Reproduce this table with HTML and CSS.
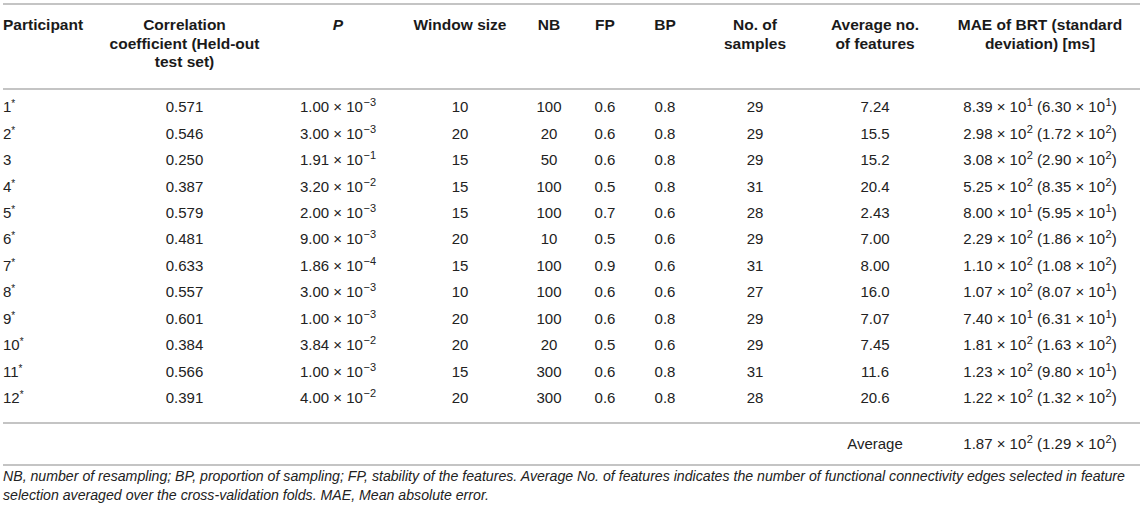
FILE: index.html
```html
<!DOCTYPE html>
<html lang="en">
<head>
<meta charset="utf-8">
<title>Table</title>
<link rel="stylesheet" href="styles.css">
</head>
<body>
<div class="page">
<table class="data">
<colgroup>
<col class="c1"><col class="c2"><col class="c3"><col class="c4"><col class="c5"><col class="c6"><col class="c7"><col class="c8"><col class="c9"><col class="c10">
</colgroup>
<thead>
<tr>
<th class="left">Participant</th>
<th>Correlation<br>coefficient (Held-out<br>test set)</th>
<th><i>P</i></th>
<th>Window size</th>
<th>NB</th>
<th>FP</th>
<th>BP</th>
<th>No. of<br>samples</th>
<th>Average no.<br>of features</th>
<th>MAE of BRT (standard<br>deviation) [ms]</th>
</tr>
</thead>
<tbody>
<tr><td class="left">1<sup class="star">*</sup></td><td>0.571</td><td>1.00 × 10<sup>−3</sup></td><td>10</td><td>100</td><td>0.6</td><td>0.8</td><td>29</td><td>7.24</td><td>8.39 × 10<sup>1</sup> (6.30 × 10<sup>1</sup>)</td></tr>
<tr><td class="left">2<sup class="star">*</sup></td><td>0.546</td><td>3.00 × 10<sup>−3</sup></td><td>20</td><td>20</td><td>0.6</td><td>0.8</td><td>29</td><td>15.5</td><td>2.98 × 10<sup>2</sup> (1.72 × 10<sup>2</sup>)</td></tr>
<tr><td class="left">3</td><td>0.250</td><td>1.91 × 10<sup>−1</sup></td><td>15</td><td>50</td><td>0.6</td><td>0.8</td><td>29</td><td>15.2</td><td>3.08 × 10<sup>2</sup> (2.90 × 10<sup>2</sup>)</td></tr>
<tr><td class="left">4<sup class="star">*</sup></td><td>0.387</td><td>3.20 × 10<sup>−2</sup></td><td>15</td><td>100</td><td>0.5</td><td>0.8</td><td>31</td><td>20.4</td><td>5.25 × 10<sup>2</sup> (8.35 × 10<sup>2</sup>)</td></tr>
<tr><td class="left">5<sup class="star">*</sup></td><td>0.579</td><td>2.00 × 10<sup>−3</sup></td><td>15</td><td>100</td><td>0.7</td><td>0.6</td><td>28</td><td>2.43</td><td>8.00 × 10<sup>1</sup> (5.95 × 10<sup>1</sup>)</td></tr>
<tr><td class="left">6<sup class="star">*</sup></td><td>0.481</td><td>9.00 × 10<sup>−3</sup></td><td>20</td><td>10</td><td>0.5</td><td>0.6</td><td>29</td><td>7.00</td><td>2.29 × 10<sup>2</sup> (1.86 × 10<sup>2</sup>)</td></tr>
<tr><td class="left">7<sup class="star">*</sup></td><td>0.633</td><td>1.86 × 10<sup>−4</sup></td><td>15</td><td>100</td><td>0.9</td><td>0.6</td><td>31</td><td>8.00</td><td>1.10 × 10<sup>2</sup> (1.08 × 10<sup>2</sup>)</td></tr>
<tr><td class="left">8<sup class="star">*</sup></td><td>0.557</td><td>3.00 × 10<sup>−3</sup></td><td>10</td><td>100</td><td>0.6</td><td>0.6</td><td>27</td><td>16.0</td><td>1.07 × 10<sup>2</sup> (8.07 × 10<sup>1</sup>)</td></tr>
<tr><td class="left">9<sup class="star">*</sup></td><td>0.601</td><td>1.00 × 10<sup>−3</sup></td><td>20</td><td>100</td><td>0.6</td><td>0.8</td><td>29</td><td>7.07</td><td>7.40 × 10<sup>1</sup> (6.31 × 10<sup>1</sup>)</td></tr>
<tr><td class="left">10<sup class="star">*</sup></td><td>0.384</td><td>3.84 × 10<sup>−2</sup></td><td>20</td><td>20</td><td>0.5</td><td>0.6</td><td>29</td><td>7.45</td><td>1.81 × 10<sup>2</sup> (1.63 × 10<sup>2</sup>)</td></tr>
<tr><td class="left">11<sup class="star">*</sup></td><td>0.566</td><td>1.00 × 10<sup>−3</sup></td><td>15</td><td>300</td><td>0.6</td><td>0.8</td><td>31</td><td>11.6</td><td>1.23 × 10<sup>2</sup> (9.80 × 10<sup>1</sup>)</td></tr>
<tr><td class="left">12<sup class="star">*</sup></td><td>0.391</td><td>4.00 × 10<sup>−2</sup></td><td>20</td><td>300</td><td>0.6</td><td>0.8</td><td>28</td><td>20.6</td><td>1.22 × 10<sup>2</sup> (1.32 × 10<sup>2</sup>)</td></tr>
</tbody>
<tfoot>
<tr><td class="left"></td><td></td><td></td><td></td><td></td><td></td><td></td><td></td><td>Average</td><td>1.87 × 10<sup>2</sup> (1.29 × 10<sup>2</sup>)</td></tr>
</tfoot>
</table>
<p class="note">NB, number of resampling; BP, proportion of sampling; FP, stability of the features. Average No. of features indicates the number of functional connectivity edges selected in feature selection averaged over the cross-validation folds. MAE, Mean absolute error.</p>
</div>
</body>
</html>
```
FILE: styles.css
```css
html, body {
  margin: 0;
  padding: 0;
  background: #ffffff;
}

body {
  font-family: "Liberation Sans", Arial, Helvetica, sans-serif;
  color: #222222;
}

.page {
  padding: 3px 5px 0 3px;
}

.data {
  border-collapse: collapse;
  table-layout: fixed;
  width: 1137px;
}

.c1 { width: 92px; }
.c2 { width: 179px; }
.c3 { width: 128px; }
.c4 { width: 116px; }
.c5 { width: 62px; }
.c6 { width: 50px; }
.c7 { width: 70px; }
.c8 { width: 110px; }
.c9 { width: 130px; }
.c10 { width: 200px; }

.data th {
  font-size: 15.5px;
  font-weight: bold;
  line-height: 18.5px;
  color: #1a1a1a;
  vertical-align: top;
  text-align: center;
  padding: 11px 0 16px;
  border-top: 2px solid #c4c4c4;
  border-bottom: 2px solid #c4c4c4;
  white-space: nowrap;
}

.data td {
  font-size: 15px;
  height: 26.45px;
  padding: 0;
  text-align: center;
  vertical-align: middle;
  white-space: nowrap;
}

.data .left {
  text-align: left;
}

.data tbody tr:first-child td {
  padding-top: 4px;
}

.data tbody tr:last-child td {
  padding-bottom: 11px;
}

.data tfoot td {
  height: 40px;
  border-top: 2px solid #c4c4c4;
  border-bottom: 2px solid #c4c4c4;
}

.data sup {
  font-size: 11px;
  line-height: 0;
  vertical-align: 6px;
  margin-left: 0.5px;
}

.data sup.star {
  font-size: 10px;
  vertical-align: 5px;
  margin-left: 0;
}

.note {
  margin: 1px 0 0;
  font-size: 14.15px;
  font-style: italic;
  line-height: 19px;
  color: #222222;
}
```
